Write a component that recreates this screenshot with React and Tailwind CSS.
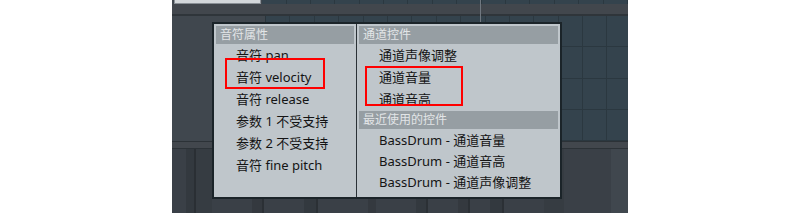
import React from 'react'

const LEFT = ['音符 pan', '音符 velocity', '音符 release', '参数 1 不受支持', '参数 2 不受支持', '音符 fine pitch']
const CHANNEL = ['通道声像调整', '通道音量', '通道音高']
const RECENT = ['BassDrum - 通道音量', 'BassDrum - 通道音高', 'BassDrum - 通道声像调整']

// stripes in the lower strip: [width, colour]
const STRIPES = [
  [14, '#3a4047'], [8, '#33393f'], [2, '#2a2f34'], [16, '#363c42'], [40, '#3a4047'], [10, '#34393f'],
  [2, '#2b3035'], [40, '#3a4047'], [12, '#33393f'], [2, '#2b3035'], [50, '#3a4047'], [8, '#34393f'],
  [40, '#3a4047'], [10, '#33393f'], [2, '#2b3035'], [30, '#3a4047'], [10, '#34393f'], [2, '#2b3035'],
  [20, '#3a4047'], [12, '#33393f'], [2, '#2b3035'], [40, '#3a4047'], [20, '#363c42'], [47, '#3a4047'],
]

const FONT = "font-['Noto_Sans','Noto_Sans_CJK_SC',sans-serif]"

function Header({ children }) {
  return (
    <div className="flex h-[18px] items-center bg-[#969ea3] pl-1 text-[12px] leading-none text-[#e2e5e7]">{children}</div>
  )
}

function Row({ children, h = 'h-[22px]' }) {
  return <div className={'flex items-center pl-[20px] text-[13px] leading-none text-[#141414] ' + h}>{children}</div>
}

function Grid() {
  const cells = Array.from({ length: 60 })
  return (
    <div className="grid h-full flex-1 grid-cols-[repeat(15,24.4px)] grid-rows-4 overflow-hidden border-l border-[#2a353c] bg-[#34434d]">
      {cells.map((_, i) => (
        <div key={i} className="border-r border-b border-[#2b3840]" />
      ))}
    </div>
  )
}

export default function App() {
  return (
    <div className={'relative flex h-[213px] w-[800px] bg-white ' + FONT}>
      <div className="w-[172px] shrink-0" />
      <div className="flex w-[456px] shrink-0 flex-col bg-[#40474e]">
        {/* top strip */}
        <div className="flex h-[4px]">
          <div className="ml-[2px] w-[90px] border-x border-b border-[#8a9096] bg-[#d4d8db]" />
          <div className="ml-[1px] flex flex-1 bg-[#34434d]">
            {Array.from({ length: 15 }).map((_, i) => (
              <div key={i} className="w-[24.4px] shrink-0 border-r border-[#2b3840]" />
            ))}
          </div>
        </div>
        {/* band */}
        <div className="h-[12px] border-b-2 border-[#2f353a] bg-[#42474d]" />
        {/* main */}
        <div className="flex h-[125px]">
          <div className="w-[93px] shrink-0 bg-[#40474e]" />
          <Grid />
        </div>
        <div className="h-[8px] border-y border-[#2c3237] bg-[#42474d]" />
        {/* lower strip */}
        <div className="flex flex-1 overflow-hidden">
          {STRIPES.map(([w, c], i) => (
            <div key={i} className="h-full shrink-0" style={{ width: w, background: c }} />
          ))}
        </div>
      </div>

      {/* playhead marker */}
      <div className="absolute left-[480px] top-0 h-[22px] w-px bg-[#707880]" />

      {/* popup menu */}
      <div className="absolute left-[212px] top-[22px] flex h-[177px] w-[350px] border-2 border-[#1b2429] bg-[#bfc6cb]">
        <div className="w-[143px] shrink-0 border-r border-[#2a3136] px-[2px] pt-[2px]">
          <Header>音符属性</Header>
          {LEFT.map((t) => (
            <Row key={t}>{t}</Row>
          ))}
        </div>
        <div className="flex-1 px-[2px] pt-[2px]">
          <Header>通道控件</Header>
          {CHANNEL.map((t) => (
            <Row key={t}>{t}</Row>
          ))}
          <div className="mt-px">
            <Header>最近使用的控件</Header>
          </div>
          <div className="pt-px">
            {RECENT.map((t) => (
              <Row key={t} h="h-[21px]">{t}</Row>
            ))}
          </div>
        </div>
      </div>

      {/* red highlight boxes */}
      <div className="absolute left-[225px] top-[58px] h-[31px] w-[100px] border-2 border-[#ff0000]" />
      <div className="absolute left-[365px] top-[66px] h-[40px] w-[98px] border-2 border-[#ff0000]" />
    </div>
  )
}
